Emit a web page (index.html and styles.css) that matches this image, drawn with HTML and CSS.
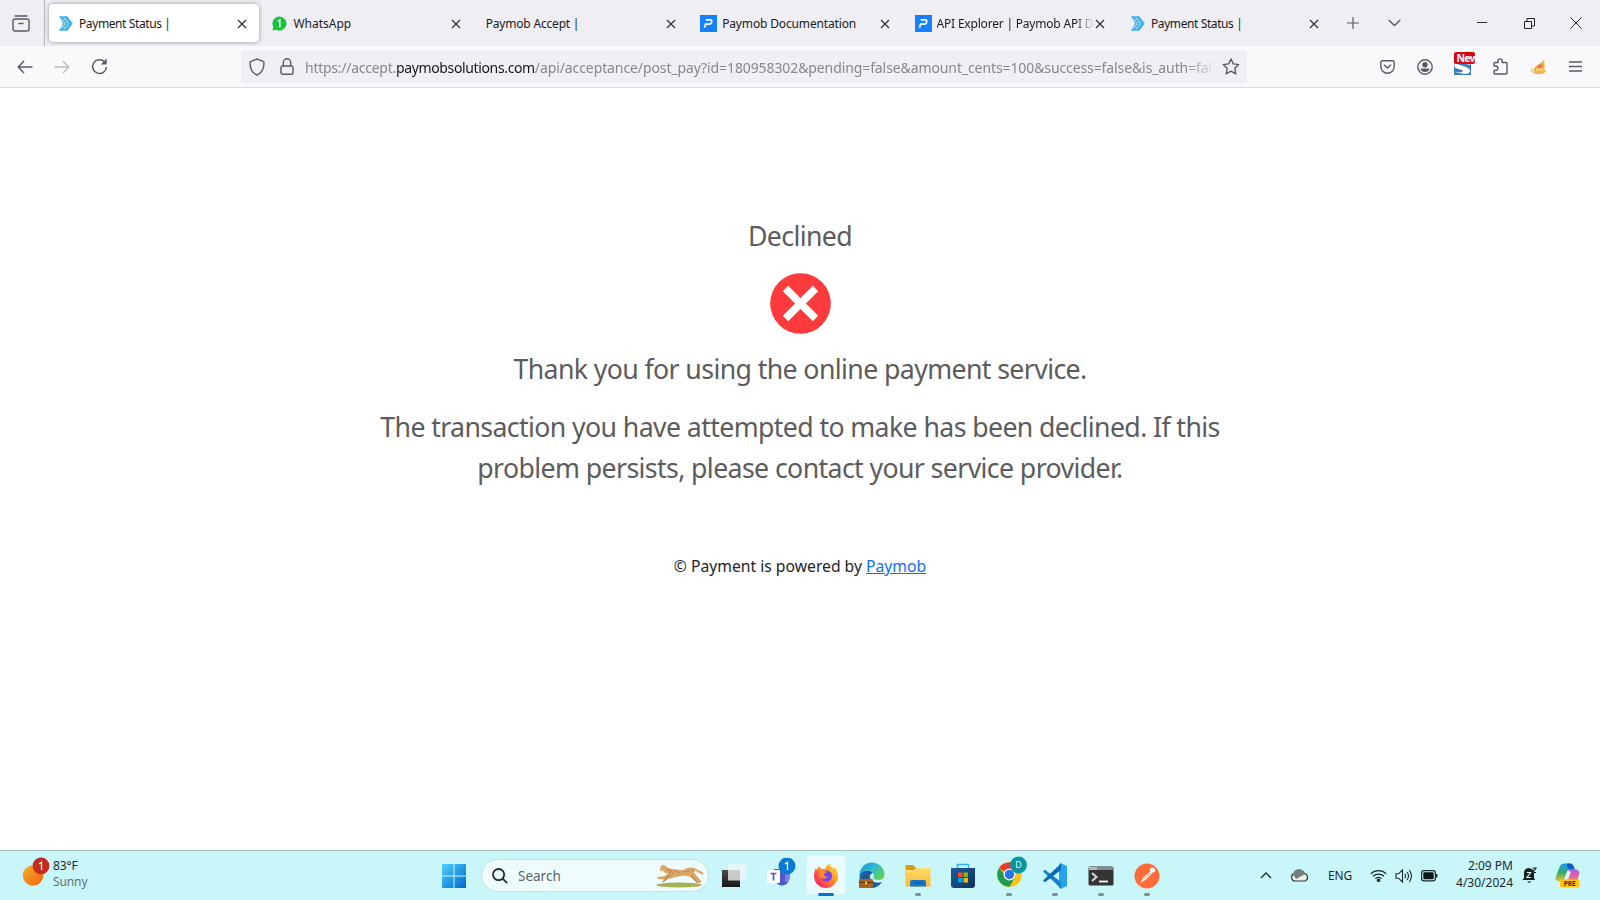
FILE: index.html
```html
<!DOCTYPE html>
<html lang="en">
<head>
<meta charset="utf-8">
<title>Payment Status |</title>
<link rel="stylesheet" href="styles.css">
</head>
<body>
<svg width="0" height="0" class="defs">
  <defs>
    <linearGradient id="cyan" x1="0" y1="0" x2="1" y2="1"><stop offset="0" stop-color="#4fd0fb"/><stop offset="1" stop-color="#0069cf"/></linearGradient>
    <linearGradient id="sun" x1="0" y1="0" x2="1" y2="1"><stop offset="0" stop-color="#f6b02c"/><stop offset="1" stop-color="#f0640e"/></linearGradient>
    <linearGradient id="dark" x1="0" y1="0" x2="0" y2="1"><stop offset="0" stop-color="#4b4b4b"/><stop offset="1" stop-color="#161616"/></linearGradient>
    <linearGradient id="fox" x1="1" y1="0" x2="0" y2="1"><stop offset="0" stop-color="#fff04a"/><stop offset=".4" stop-color="#ff9a25"/><stop offset=".75" stop-color="#ff3d50"/><stop offset="1" stop-color="#e31587"/></linearGradient>
    <linearGradient id="edge" x1="0" y1="0" x2="1" y2=".7"><stop offset="0" stop-color="#2491d8"/><stop offset=".5" stop-color="#2cb8d0"/><stop offset="1" stop-color="#65d252"/></linearGradient>
    <linearGradient id="fold" x1="0" y1="0" x2="0" y2="1"><stop offset="0" stop-color="#ffdc70"/><stop offset="1" stop-color="#fcb92b"/></linearGradient>
    <linearGradient id="store" x1="0" y1="0" x2="1" y2="1"><stop offset="0" stop-color="#1d5d9d"/><stop offset="1" stop-color="#12315f"/></linearGradient>
    <linearGradient id="copA" x1="0" y1="0" x2="0" y2="1"><stop offset="0" stop-color="#1aa0ec"/><stop offset=".5" stop-color="#3aa86c"/><stop offset="1" stop-color="#ecc32b"/></linearGradient>
    <linearGradient id="copB" x1="0" y1="0" x2="0" y2="1"><stop offset="0" stop-color="#a55be6"/><stop offset=".6" stop-color="#ec5fa6"/><stop offset="1" stop-color="#f9884d"/></linearGradient>
    <symbol id="x" viewBox="0 0 10 10"><path d="M1 1l8 8M9 1L1 9" fill="none" stroke="#2f2e36" stroke-width="1.2"/></symbol>
    <symbol id="accept" viewBox="0 0 14 15"><path d="M0 .3h8.200L13.800 7.500 8.200 14.700H0L4.200 7.500z" fill="#3bb3ee"/><path d="M2.300 2.500l4 5-4 5M5 1.800l4.700 5.700L5 13.200" fill="none" stroke="#e9f5fc" stroke-width=".8"/></symbol>
    <symbol id="docs" viewBox="0 0 17 17"><path d="M0 0h17v17H0z" fill="#1681fb"/><path d="M4.500 12.800l1-3.600h4.600c1.400 0 2.600-4.400.5-4.400H5.800" fill="none" stroke="#fff" stroke-width="1.700"/></symbol>
  </defs>
</svg>

<header class="tabs">
  <div class="recent"><svg width="18" height="17" viewBox="0 0 18 17" fill="none" stroke="#5b5a66" stroke-width="1.4"><path d="M3 1h12" stroke-linecap="round"/><rect x="1" y="4" width="16" height="12" rx="2"/><path d="M6.500 8.500h5"/></svg></div>
  <div class="tab active"><svg class="fav accept"><use href="#accept"/></svg><span class="t tight">Payment Status |</span><svg class="close"><use href="#x"/></svg></div>
  <div class="tab"><svg class="fav" viewBox="0 0 15 15"><path d="M7.500.5a7 7 0 1 1-3.300 13.200L.5 14.500l.8-3.700A7 7 0 0 1 7.500.5" fill="#16c43c"/><path d="M5.800 5.400l2-1.400v7.200" fill="none" stroke="#fff" stroke-width="1.5"/></svg><span class="t loose">WhatsApp</span><svg class="close"><use href="#x"/></svg></div>
  <div class="tab bare"><span class="t">Paymob Accept |</span><svg class="close"><use href="#x"/></svg></div>
  <div class="tab bare"><svg class="fav docs"><use href="#docs"/></svg><span class="t mid">Paymob Documentation</span><svg class="close"><use href="#x"/></svg></div>
  <div class="tab bare"><svg class="fav docs"><use href="#docs"/></svg><span class="t fade">API Explorer | Paymob API D</span><svg class="close"><use href="#x"/></svg></div>
  <div class="tab"><svg class="fav accept"><use href="#accept"/></svg><span class="t tight">Payment Status |</span><svg class="close"><use href="#x"/></svg></div>
  <div class="newtab"><svg width="12" height="12" viewBox="0 0 12 12" stroke="#5b5a66" stroke-width="1.2"><path d="M6 0v12M0 6h12"/></svg></div>
  <div class="alltabs"><svg width="13" height="8" viewBox="0 0 13 8" fill="none" stroke="#5b5a66" stroke-width="1.4"><path d="M.7 1l5.800 5.500L12.300 1"/></svg></div>
  <div class="win"><svg width="10" height="10" viewBox="0 0 10 10" stroke="#333"><path d="M0 4.500h10"/></svg></div>
  <div class="win"><svg width="11" height="11" viewBox="0 0 11 11" fill="none" stroke="#222"><path d="M.5 3.500h7v7h-7zM3 3V.5h7.500V8H8"/></svg></div>
  <div class="win"><svg width="12" height="12" viewBox="0 0 12 12" stroke="#222"><path d="M.5.5l11 11M11.500.5l-11 11"/></svg></div>
</header>

<nav class="toolbar">
  <div class="nav"><svg width="16" height="14" viewBox="0 0 16 14" fill="none" stroke="#5b5a66" stroke-width="1.5"><path d="M15.500 7H1.200M7 1L1.200 7 7 13"/></svg></div>
  <div class="nav"><svg width="16" height="14" viewBox="0 0 16 14" fill="none" stroke="#bcbbc2" stroke-width="1.4"><path d="M.5 7h14.300M9 1l5.800 6L9 13"/></svg></div>
  <div class="nav"><svg width="17" height="17" viewBox="0 0 17 17" fill="none" stroke="#5b5a66" stroke-width="1.5"><path d="M13.500 3.800A6.900 6.900 0 1 0 15.400 9"/><path d="M15.700.5v6h-6z" fill="#5b5a66" stroke="none"/></svg></div>
  <div class="urlbar">
    <svg class="shield" width="16" height="18" viewBox="0 0 16 18" fill="none" stroke="#5b5a66" stroke-width="1.4"><path d="M8 1l6 2.300q1 .4 1 1.400C15 10 13 15 8 17 3 15 1 10 1 4.700q0-1 1-1.400z" stroke-linejoin="round"/></svg>
    <svg class="lock" width="14" height="17" viewBox="0 0 14 17" fill="none" stroke="#5b5a66" stroke-width="1.4"><rect x="1" y="8" width="12" height="8.200" rx="1.800"/><path d="M3.300 8V4.500a3.700 3.700 0 0 1 7.400 0V8"/></svg>
    <span class="url"><span class="scheme">https://accept.</span><b>paymobsolutions.com</b><span class="path">/api/acceptance/post_pay?id=180958302&amp;pending=false&amp;amount_cents=100&amp;success=false&amp;is_auth=fal</span></span>
    <svg class="star" width="18" height="17" viewBox="0 0 18 17" fill="none" stroke="#5b5a66" stroke-width="1.4" stroke-linejoin="round"><path d="M9 1l2.300 4.900 5.400.7-3.900 3.700 1 5.500L9 13.200l-4.800 2.600 1-5.500L1.300 6.600l5.400-.7z"/></svg>
  </div>
  <div class="ext">
    <div class="e"><svg width="15" height="14" viewBox="0 0 15 14" fill="none" stroke="#5b5a66" stroke-width="1.4"><path d="M2.500.8h10q1.700 0 1.700 1.700V6.500a6.700 6.700 0 0 1-13.400 0V2.500Q.8.8 2.500.8z"/><path d="M4.300 5l3.200 3 3.200-3" stroke-linecap="round"/></svg></div>
    <div class="e"><svg width="16" height="16" viewBox="0 0 16 16"><circle cx="8" cy="8" r="7.200" fill="none" stroke="#5b5a66" stroke-width="1.400"/><circle cx="8" cy="5.700" r="2.700" fill="#5b5a66"/><path d="M3.300 9.500h9.400Q11.500 13 8 13T3.300 9.500z" fill="#5b5a66"/></svg></div>
    <div class="e"><span class="snag"><svg width="17" height="17" viewBox="0 0 17 17"><path d="M0 0h17v17H0z" fill="#3c7db9"/><path d="M0 5l9 3q7 2 7 5 0 3-6 3l-9-2 6 .2q3-.2 1-2.200L1 10zM8 5h8v2z" fill="#fff"/></svg><span class="new">New</span></span></div>
    <div class="e"><svg width="15" height="17" viewBox="0 0 15 17" fill="none" stroke="#5b5a66" stroke-width="1.400" stroke-linejoin="round"><path d="M1 8V5.500q0-1 1-1h3V3a2.100 2.100 0 0 1 4.200 0v1.500H13q1 0 1 1V15q0 1-1 1H2q-1 0-1-1v-2.500h1.700a2.200 2.200 0 0 0 0-4.500z"/></svg></div>
    <div class="e"><svg width="16" height="16" viewBox="0 0 16 16"><path d="M13.500 0l-.5 2.500C9 4 6 7 4 9.500L3.500 14q5 2.500 10.500 0 2-1 2-2-2-1-1.500-4V3z" fill="#edb34b"/><path d="M7 8l3-2.500 3 1L10 9z" fill="#e8624d"/><path d="M1 9l2.500 3L0 12M2 14l3-1" stroke="#d9c79a" fill="none"/><path d="M6 12q3-3 7-1" stroke="#f9dc87" stroke-width="1.500" fill="none"/></svg></div>
    <div class="e"><svg width="13" height="11" viewBox="0 0 13 11" stroke="#5b5a66" stroke-width="1.300"><path d="M0 1h13M0 5.500h13M0 10h13"/></svg></div>
  </div>
</nav>

<main class="page">
  <p class="msg">Declined</p>
  <svg class="cross" width="61" height="61" viewBox="0 0 61 61"><circle cx="30.500" cy="30.500" r="30.300" fill="#fe3a3c"/><path d="M15.500 15.500l30 30M45.500 15.500l-30 30" stroke="#fff" stroke-width="7.500"/></svg>
  <p class="msg thanks">Thank you for using the online payment service.</p>
  <p class="msg detail">The transaction you have attempted to make has been declined. If this<br>problem persists, please contact your service provider.</p>
  <p class="powered">© Payment is powered by <a>Paymob</a></p>
</main>

<footer class="taskbar">
  <div class="weather">
    <svg width="28" height="30" viewBox="0 0 28 30"><circle cx="11" cy="18.500" r="10.300" fill="url(#sun)"/><circle cx="19" cy="9" r="8.400" fill="#c42b1c"/><path d="M17 6.800l2.500-1.500V13" fill="none" stroke="#fff" stroke-width="1.300"/></svg>
    <div class="wtext"><span>83°F</span><span class="dim">Sunny</span></div>
  </div>
  <svg class="start" width="24" height="24" viewBox="0 0 24 24"><path d="M0 0h11.500v11.500H0zM12.500 0H24v11.500H12.500zM0 12.500h11.500V24H0zM12.500 12.500H24V24H12.500z" fill="url(#cyan)"/></svg>
  <div class="search">
    <svg width="16" height="16" viewBox="0 0 16 16" fill="none" stroke="#222b2c" stroke-width="1.800"><circle cx="6.600" cy="6.600" r="5.600"/><path d="M10.700 10.700l4.500 4.500"/></svg>
    <span class="st">Search</span>
    <svg class="cheetah" width="48" height="24" viewBox="0 0 48 24"><ellipse cx="23" cy="21" rx="22.500" ry="2.500" fill="#a9b052"/><path d="M4 5L5 2 7 .8 9.500 1.800Q11 4 14 4.500L20 5.500 27 6Q33 2.500 38 4L46.500 8 47.500 11 46 10.500 39 6.500Q37 8 40 11L45.500 17.500 44 19.500 35 13 28 11.500 20 13 14 14.500 8 15.500 2 15 1 13 9 12 12 9.500Q8 9 7 6.500L4 7z" fill="#dba565"/><path d="M11 5.500L16 7M19 7l5 2M28 8l5-1M36 6l2 2M14 9l4 .5" stroke="#a86c38" stroke-dasharray="1 1"/><path d="M14 11l-7 7M35 12l7 7" stroke="#bd8751" stroke-width="1.500"/></svg>
  </div>
  <div class="apps">
    <div class="app"><svg width="26" height="26" viewBox="0 0 26 26"><path d="M1 7h18v17H1z" fill="url(#dark)"/><path d="M7 1h18v16.500H7z" fill="#f1f4f4" fill-opacity=".78"/></svg></div>
    <div class="app"><svg class="teams" width="30" height="30" viewBox="0 0 30 30"><circle cx="17" cy="10" r="4" fill="#7b83eb"/><path d="M8 11h15v10a7 7 0 0 1-13 3z" fill="#5059c9"/><path d="M19 13h5v7q-1 4-5 4z" fill="#7b83eb"/><rect x="1" y="12" width="13" height="13" rx="1" fill="#fff"/><path d="M4.500 15.500h6M7.500 15.500v7" stroke="#5059c9" stroke-width="1.700"/><circle cx="21" cy="8" r="8.500" fill="#0a78d4"/><path d="M19 6l2.500-1.700V12" stroke="#fff" stroke-width="1.300" fill="none"/></svg></div>
    <div class="app on"><svg width="26" height="26" viewBox="0 0 26 26"><path d="M13 25A12 12 0 0 1 1 13Q1 8 3 5l1 2 2-4 2 3 4 0Q13 2 17 .5q0 3 3 5l1-2q4 4 4 9A12 12 0 0 1 13 25z" fill="url(#fox)"/><circle cx="13.500" cy="13" r="5.500" fill="#7542e5"/><path d="M6 8q4-2 6 0l2 1-3 2q0 3 4 3-3 3-7 1-3-2-2-7z" fill="#ff8a2b"/></svg><i></i></div>
    <div class="app"><svg width="27" height="27" viewBox="0 0 27 27"><path d="M1.500 14A12.500 12.500 0 0 1 26.500 12q0 6-6.500 6-6 0-4-4 0-4-5-4Q5 10 1.500 14z" fill="url(#edge)"/><path d="M1.500 15Q3 8 10 9q4 .5 4.500 2Q10 13 13 18q4 4 11 2-4 6-11 6Q2 25 1.500 15z" fill="#155fae"/><rect x="1" y="17" width="14" height="9" rx="1" fill="#a5631d"/><path d="M1 20.500h14" stroke="#57300b"/><path d="M5 17v-2h6v2" fill="none" stroke="#7a410d"/><path d="M7 19.500h2v3H7z" fill="#f5ba42"/></svg></div>
    <div class="app"><svg width="26" height="24" viewBox="0 0 26 24"><path d="M.5 2q0-1 1-1H8l3 3h14v8H.5z" fill="#dc9a11"/><path d="M.5 6H9l2-2h14.500v18.500H.5z" fill="url(#fold)"/><path d="M5 18q0-2 2-2h12q2 0 2 2v4.500H5z" fill="#1676c9"/><path d="M9 19h8" stroke="#0c529a" stroke-width="1.200"/></svg><i></i></div>
    <div class="app"><svg width="24" height="26" viewBox="0 0 24 26"><path d="M6.500 5V1.500h11V5" fill="none" stroke="#31b5ef" stroke-width="1.500"/><path d="M0 5h24v17q0 3-3 3H3q-3 0-3-3z" fill="url(#store)"/><path d="M7 9.500h4.500V14H7z" fill="#f25022"/><path d="M12.500 9.500H17V14h-4.500z" fill="#7fba00"/><path d="M7 15h4.500v4.500H7z" fill="#00a4ef"/><path d="M12.500 15H17v4.500h-4.500z" fill="#ffb900"/></svg></div>
    <div class="app"><svg class="wide" width="30" height="32" viewBox="0 0 30 32"><circle cx="12.500" cy="18.500" r="12.300" fill="#fbc116"/><path d="M12.500 18.500L1.900 12.300a12.300 12.300 0 0 1 21.200 0z" fill="#e33b2e"/><path d="M1.900 12.300a12.300 12.300 0 0 0 10.600 18.500l6-10.500-8 1z" fill="#229a4b"/><circle cx="12.500" cy="18.500" r="6" fill="#fff"/><circle cx="12.500" cy="18.500" r="4.700" fill="#2875e8"/><circle cx="21.500" cy="9" r="8.400" fill="#0c93a0"/><text x="21.500" y="12.300" class="dl">D</text></svg><i></i></div>
    <div class="app"><svg width="26" height="26" viewBox="0 0 26 26"><path d="M18.500 0L25 3v20l-6.500 3L17 24.500V1.500z" fill="#26a2ee"/><path d="M1 8.500l2-1.700L19 19v6.500z" fill="#1780cd"/><path d="M1 17.500l2 1.700L19 7V.5z" fill="#0b6bb5"/></svg><i></i></div>
    <div class="app"><svg width="26" height="20" viewBox="0 0 26 20"><rect x=".5" y=".5" width="25" height="19" rx="1.500" fill="#333436"/><path d="M1 1h24v3H1z" fill="#85888a"/><path d="M1 1h8v3H1z" fill="#b7babb"/><path d="M4 7l4.500 4L4 15" fill="none" stroke="#d7dadb" stroke-width="2"/><path d="M11 15.500h9" stroke="#fff" stroke-width="1.800"/></svg><i></i></div>
    <div class="app"><svg width="26" height="26" viewBox="0 0 26 26"><circle cx="13" cy="13" r="12.500" fill="#ff6c37"/><circle cx="18.500" cy="7" r="2.600" fill="#fff"/><path d="M16.500 8.500l1.700 1.500-5.700 6L6 20.500l4-7z" fill="#fff"/><path d="M16 10l-6 5.500" stroke="#ff6c37" stroke-width=".7"/></svg><i></i></div>
  </div>
  <div class="tray">
    <svg class="up" width="12" height="7" viewBox="0 0 12 7" fill="none" stroke="#1d2a2c" stroke-width="1.400"><path d="M1 6l5-5 5 5"/></svg>
    <svg class="cloud" width="18" height="13" viewBox="0 0 18 13"><path d="M4.500 12A3.700 3.700 0 0 1 3.500 4.700 5.300 5.300 0 0 1 13.300 4.500 3.900 3.900 0 0 1 14 12z" fill="#eceeee" stroke="#303637" stroke-width="1.200"/><path d="M2.300 5.500a5.300 5.300 0 0 1 10.200-2.200L14 5 5 10z" fill="#777e80"/></svg>
    <span class="eng">ENG</span>
    <svg class="wifi" width="17" height="13" viewBox="0 0 17 13" fill="none" stroke="#1d2a2c" stroke-width="1.200"><path d="M.7 4.800a11 11 0 0 1 15.600 0M3 7.300a7.800 7.800 0 0 1 11 0M5.300 9.700a4.500 4.500 0 0 1 6.400 0"/><circle cx="8.500" cy="11.300" r="1.200" fill="#1d2a2c"/></svg>
    <svg class="vol" width="18" height="14" viewBox="0 0 18 14" fill="none" stroke="#1d2a2c" stroke-width="1.100"><path d="M1 4.800h2.500L7.500 1v12L3.500 9.200H1zM9.800 4.700q1.500 2.300 0 4.600M12 3q3 4 0 8M14.300 1.200q4.300 5.800 0 11.600"/></svg>
    <svg class="bat" width="17" height="12" viewBox="0 0 17 12"><rect x=".6" y=".6" width="13.800" height="10.300" rx="2.300" fill="none" stroke="#1d2a2c" stroke-width="1.200"/><rect x="2.300" y="2.300" width="10.400" height="6.900" rx="1" fill="#0d1718"/><path d="M15.500 4v3.500" stroke="#1d2a2c" stroke-width="1.800"/></svg>
    <div class="clock"><span>2:09 PM</span><span>4/30/2024</span></div>
    <svg class="bell" width="15" height="17" viewBox="0 0 15 17"><path d="M2 5q1-4 5-4 5 1 5 5v5l1.200 2H.5L2 11zM5 14.500h4.500q-2.200 2.500-4.500 0z" fill="#122022"/><path d="M4.800 5.500h4l-4 5h4" fill="none" stroke="#dffafa" stroke-width="1.100"/><path d="M10.500 1h3.500l-3.500 4.500H14" fill="none" stroke="#122022" stroke-width="1.200"/></svg>
    <svg class="copilot" width="25" height="25" viewBox="0 0 25 25"><path d="M5 3q1-2.500 4-2.500h6q3 0 4 4l1 2h-5q-2.500 0-3.500 3l-2 6q-1 3-4 3-5 0-5-4z" fill="url(#copA)"/><path d="M12 .5h3q3 0 4 4l1 2h-5q-2 0-3-3z" fill="#1758c9"/><path d="M15 6.500h5q4.500 0 4.300 4l-2 7H9q2 0 3-3l1.500-6q.5-2 1.500-2z" fill="url(#copB)"/><path d="M13 8.500h3l-3 8h-3z" fill="#dff7fa"/><rect x="5" y="16.500" width="19.500" height="8" rx="1.500" fill="#ffc40d"/><text x="14.700" y="23.200" class="pre">PRE</text></svg>
  </div>
</footer>
</body>
</html>
```

FILE: styles.css
```css
* { box-sizing: border-box; }
body { margin: 0; width: 1600px; height: 900px; display: flex; flex-direction: column; overflow: hidden; background: #fff; font-family: "Noto Sans", "Open Sans", sans-serif; color: #1b1b20; }
svg { display: block; flex: none; }
.defs { position: absolute; }
p { margin: 0; }

/* Tab strip */
.tabs { height: 46px; flex: none; display: flex; align-items: center; background: #efeef3; }
.recent { width: 45px; height: 46px; border-right: 1px solid #b5b4bd; display: flex; align-items: center; padding-left: 12px; margin-right: 4px; }
.tab { width: 210px; height: 38px; margin-right: 4.400px; border-radius: 4px; display: flex; align-items: center; padding: 1px 12px 0 9px; font-size: 12px; white-space: nowrap; }
.tab.bare { padding-left: 8px; }
.tab.active { background: #fff; box-shadow: 0 0 4px rgba(0,0,0,.4); }
.fav { width: 15px; height: 15px; margin-right: 6px; }
.fav.accept { width: 14px; margin: 0 6px 0 1px; }
.fav.docs { width: 17px; height: 17px; margin-right: 5px; }
.t { letter-spacing: -.2px; }
.tight { letter-spacing: -.4px; }
.mid { letter-spacing: -.15px; }
.loose { letter-spacing: 0; }
.fade { -webkit-mask-image: linear-gradient(90deg, #000 138px, transparent 158px); mask-image: linear-gradient(90deg, #000 138px, transparent 158px); }
.close { width: 10px; height: 10px; margin-left: auto; }
.newtab { width: 42px; display: flex; justify-content: center; margin-left: -3.500px; }
.alltabs { width: 42px; display: flex; justify-content: center; }
.win { width: 47px; display: flex; justify-content: center; }
.alltabs + .win { margin-left: 43px; }

/* Navigation toolbar */
.toolbar { height: 42px; flex: none; display: flex; align-items: center; background: #f9f9fb; border-bottom: 1px solid #dcdce0; padding-left: 6px; }
.nav { width: 37.500px; display: flex; justify-content: center; }
.urlbar { width: 1006px; height: 33px; margin-left: 122.500px; border-radius: 4px; background: #f0eff4; display: flex; align-items: center; padding: 0 7px 0 8px; }
.lock { margin-left: 15px; }
.url { width: 909px; margin: 2px 0 0 11px; white-space: nowrap; font-size: 14px; color: #88878f; -webkit-mask-image: linear-gradient(90deg, #000 880px, transparent 912px); mask-image: linear-gradient(90deg, #000 880px, transparent 912px); }
.scheme { letter-spacing: -.26px; }
.url b { font-weight: 400; color: #18171f; letter-spacing: -.36px; }
.path { letter-spacing: -.1px; }
.star { margin-left: auto; }
.ext { display: flex; margin-left: 122px; }
.e { width: 37.600px; display: flex; justify-content: center; align-items: center; }
.snag { position: relative; }
.new { position: absolute; left: 0; top: -6px; width: 21px; height: 12px; overflow: hidden; border-radius: 2px; background: #d9070f; color: #fff; font-size: 10.500px; font-weight: 700; line-height: 12px; letter-spacing: -.7px; padding-left: 2px; }

/* Payment status page */
.page { flex: 1; display: flex; flex-direction: column; align-items: center; text-align: center; padding-top: 127px; }
.msg { font-size: 26.700px; line-height: 41px; letter-spacing: -.61px; color: #5c5c5c; white-space: nowrap; }
.cross { margin-top: 17px; }
.thanks { margin-top: 14px; }
.detail { margin-top: 17px; }
.powered { font-size: 15.700px; line-height: 24px; margin-top: 66px; color: #212529; }
.powered a { color: #0d6efd; text-decoration: underline; }

/* Taskbar */
.taskbar { height: 50px; flex: none; display: flex; align-items: center; background: #c9f6f9; border-top: 1px solid #a1bec2; color: #1d2a2c; font-size: 12px; }
.weather { width: 420px; display: flex; padding-left: 22px; margin-top: -4px; }
.wtext { display: flex; flex-direction: column; line-height: 16.500px; margin: 1px 0 0 3px; letter-spacing: -.1px; }
.dim { color: #5a7274; }
.start { margin-left: 22px; }
.search { width: 228px; height: 33px; margin-left: 15px; border-radius: 17px; background: #eefcfe; border: 1px solid #c0dfe2; display: flex; align-items: center; padding: 0 4px 0 10px; font-size: 13.500px; color: #566567; }
.st { margin-left: 10px; }
.cheetah { margin-left: auto; }
.apps { display: flex; margin-left: 2px; height: 49px; }
.app { width: 45.900px; position: relative; display: flex; align-items: center; justify-content: center; }
.app svg { position: relative; }
.app .wide { margin: -7px 0 0 5px; }
.app .teams { margin: -5px 0 0 3px; }
.app.on::before { content: ""; position: absolute; inset: 4px 3px 5px; background: #e9fbfd; border: 1px solid #d8f3f5; border-radius: 4px; }
.app i { position: absolute; bottom: 4px; left: 20px; width: 6px; height: 3px; border-radius: 2px; background: #7c8f92; }
.app.on i { left: 15px; width: 16px; background: #0a74cf; }
.dl { font: 9px "Noto Sans", sans-serif; fill: #d7f4f4; text-anchor: middle; }
.tray { display: flex; align-items: center; margin-left: auto; padding-right: 20px; }
.cloud { margin-left: 19px; }
.eng { margin-left: 19px; font-size: 12px; letter-spacing: -.2px; }
.wifi { margin-left: 18px; }
.vol { margin-left: 8px; }
.bat { margin-left: 8px; }
.clock { display: flex; flex-direction: column; align-items: flex-end; width: 75px; line-height: 16.500px; margin-top: -2px; }
.bell { margin-left: 9px; }
.copilot { margin-left: 18px; }
.pre { font: 700 6.500px "Noto Sans", sans-serif; fill: #3a2b00; text-anchor: middle; }
```
